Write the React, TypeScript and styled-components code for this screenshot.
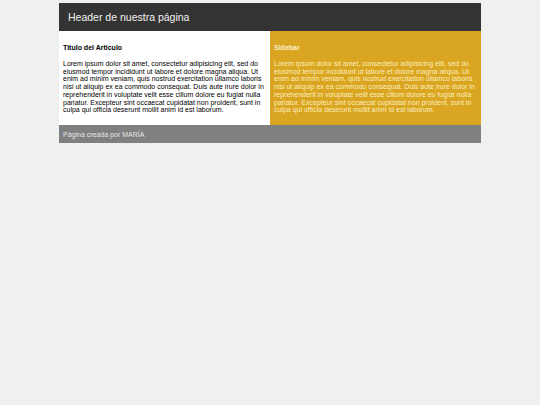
import styled, { createGlobalStyle } from 'styled-components';

const lorem =
  'Lorem ipsum dolor sit amet, consectetur adipisicing elit, sed do eiusmod tempor incididunt ut labore et dolore magna aliqua. Ut enim ad minim veniam, quis nostrud exercitation ullamco laboris nisi ut aliquip ex ea commodo consequat. Duis aute irure dolor in reprehenderit in voluptate velit esse cillum dolore eu fugiat nulla pariatur. Excepteur sint occaecat cupidatat non proident, sunt in culpa qui officia deserunt mollit anim id est laborum.';

const GlobalStyle = createGlobalStyle`
  html, body {
    margin: 0;
    padding: 0;
    background: #eff0f0;
    font-family: "Liberation Sans", Arial, sans-serif;
  }
`;

const App: React.FC = () => {
  return (
    <>
      <GlobalStyle />
      <Page>
        <Header>Header de nuestra página</Header>
        <Content>
          <Article>
            <Title>Titulo del Articulo</Title>
            <Text>{lorem}</Text>
          </Article>
          <Sidebar>
            <Title $light>Sidebar</Title>
            <Text $light>{lorem}</Text>
          </Sidebar>
        </Content>
        <Footer>Página creada por MARÍA</Footer>
      </Page>
    </>
  );
};

const Page = styled.div`
  width: 422px;
  margin: 3px auto 0;
`;

const Header = styled.header`
  height: 28px;
  background-color: #333333;
  color: #f2f2f2;
  font-size: 10.5px;
  display: flex;
  align-items: center;
  padding-left: 9px;
  box-sizing: border-box;
`;

const Content = styled.div`
  display: grid;
  grid-template-columns: 1fr 1fr;
  min-height: 94px;
`;

const Article = styled.article`
  background: #ffffff;
  padding: 4px 4px 6px;
`;

const Sidebar = styled.aside`
  background: #daa520;
  padding: 4px 4px 6px;
`;

const Title = styled.h4<{ $light?: boolean }>`
  font-size: 7px;
  font-weight: bold;
  margin: 9px 0 9px;
  color: ${(p) => (p.$light ? '#fbf0cf' : '#000')};
`;

const Text = styled.p<{ $light?: boolean }>`
  font-size: 7px;
  line-height: 7.7px;
  margin: 0;
  color: ${(p) => (p.$light ? '#fbeebf' : '#000')};
`;

const Footer = styled.footer`
  height: 18px;
  background: #808080;
  color: #e6e6e6;
  font-size: 7px;
  display: flex;
  align-items: center;
  padding-left: 4px;
`;

export default App;
